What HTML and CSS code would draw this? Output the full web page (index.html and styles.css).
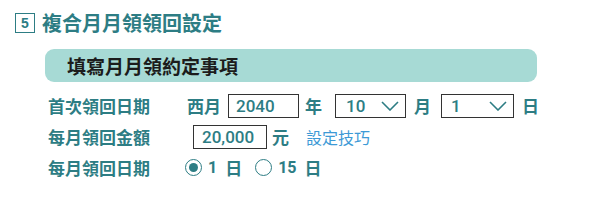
FILE: index.html
```html
<!DOCTYPE html>
<html lang="zh-Hant">
<head>
<meta charset="utf-8">
<title>複合月月領領回設定</title>
<link rel="stylesheet" href="styles.css">
</head>
<body>
<div class="page">
  <div class="title">
    <span class="num">5</span>
    <span class="title-text">複合月月領領回設定</span>
  </div>
  <div class="banner">填寫月月領約定事項</div>
  <div class="form">
    <div class="row">
      <span class="label">首次領回日期</span>
      <span class="txt era">西月</span>
      <span class="box year">2040</span>
      <span class="txt unit1">年</span>
      <span class="box sel month"><span class="val">10</span><svg class="chev" viewBox="0 0 18 10" width="18" height="10"><path d="M1 1 L9 9 L17 1" fill="none" stroke="#2d7d84" stroke-width="1.6"/></svg></span>
      <span class="txt unit2">月</span>
      <span class="box sel day"><span class="val">1</span><svg class="chev" viewBox="0 0 18 10" width="18" height="10"><path d="M1 1 L9 9 L17 1" fill="none" stroke="#2d7d84" stroke-width="1.6"/></svg></span>
      <span class="txt unit2">日</span>
    </div>
    <div class="row">
      <span class="label">每月領回金額</span>
      <span class="box amount">20,000</span>
      <span class="txt unit3">元</span>
      <a class="tip" href="#">設定技巧</a>
    </div>
    <div class="row">
      <span class="label">每月領回日期</span>
      <span class="radio checked"></span>
      <span class="txt rnum">1</span>
      <span class="txt rday">日</span>
      <span class="radio second"></span>
      <span class="txt rnum">15</span>
      <span class="txt rday">日</span>
    </div>
  </div>
</div>
</body>
</html>
```
FILE: styles.css
```css
html, body {
  margin: 0;
  padding: 0;
  background: #ffffff;
}
body {
  font-family: "Noto Sans CJK TC", "Noto Sans", sans-serif;
  color: #2d7d84;
}
.page {
  width: 600px;
  height: 201px;
  padding-top: 13px;
  box-sizing: border-box;
}
.title {
  display: flex;
  align-items: center;
  height: 20px;
  padding-left: 15px;
}
.num {
  width: 20px;
  height: 20px;
  border: 1.5px solid #2d7d84;
  box-sizing: border-box;
  display: flex;
  align-items: center;
  justify-content: center;
  font-family: "Liberation Sans", Arial, sans-serif;
  font-weight: 700;
  font-size: 14px;
  line-height: 1;
}
.title-text {
  margin-left: 7px;
  font-size: 20px;
  font-weight: 700;
  line-height: 20px;
}
.banner {
  margin: 16px 0 0 45px;
  width: 492px;
  height: 33px;
  border-radius: 9px;
  background: #a7dad5;
  color: #1c1c1c;
  font-size: 19px;
  font-weight: 700;
  line-height: 33px;
  padding-left: 22px;
  box-sizing: border-box;
}
.form {
  margin: 8px 0 0 48px;
}
.row {
  display: flex;
  align-items: center;
  height: 31px;
}
.label {
  width: 137px;
  font-size: 17px;
  font-weight: 700;
  line-height: 20px;
}
.txt {
  font-size: 17px;
  font-weight: 700;
  line-height: 20px;
}
.era {
  margin-left: 2px;
}
.box {
  display: flex;
  align-items: center;
  height: 24px;
  border: 1.5px solid #333333;
  box-sizing: border-box;
  font-family: "Roboto", "Noto Sans", sans-serif;
  font-size: 17px;
  font-weight: 500;
  color: #2d7d84;
  padding-left: 7px;
}
.year {
  margin-left: 7px;
  width: 71px;
}
.unit1 {
  margin-left: 6px;
}
.sel {
  width: 71px;
  justify-content: space-between;
  padding-right: 6px;
}
.month {
  margin-left: 13px;
}
.month .val {
  margin-left: 3px;
}
.day {
  margin-left: 10px;
  width: 73px;
}
.day .val {
  margin-left: 2px;
}
.chev {
  display: block;
}
.unit2 {
  margin-left: 8px;
}
.amount {
  margin-left: 8px;
  width: 74px;
  padding-left: 8px;
}
.unit3 {
  margin-left: 5px;
}
.tip {
  margin-left: 17px;
  font-size: 16px;
  color: #3d9ad6;
  text-decoration: none;
  line-height: 20px;
}
.radio {
  width: 17px;
  height: 17px;
  border: 1.5px solid #2d7d84;
  border-radius: 50%;
  box-sizing: border-box;
  position: relative;
}
.radio.checked::after {
  content: "";
  position: absolute;
  left: 2.5px;
  top: 2.5px;
  width: 9px;
  height: 9px;
  border-radius: 50%;
  background: #2d7d84;
}
.radio.second {
  margin-left: 13px;
}
.rnum {
  margin-left: 6px;
  font-family: "Roboto", "Noto Sans", sans-serif;
  font-size: 16px;
}
.rday {
  margin-left: 8px;
}
```
